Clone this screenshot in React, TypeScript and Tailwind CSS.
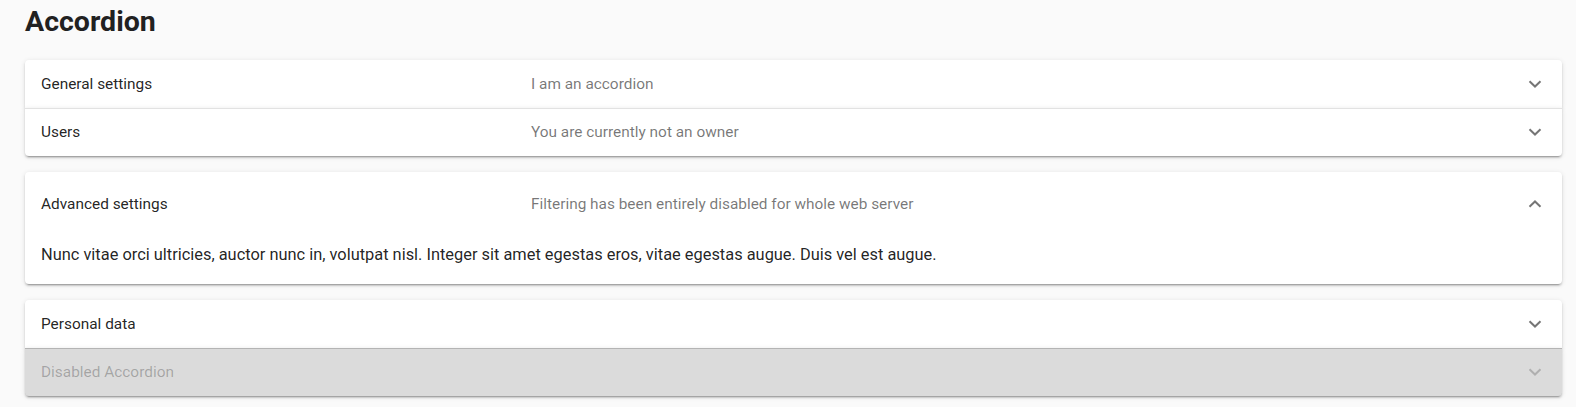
import React from "react";

type Panel = {
  title: string;
  desc?: string;
  expanded?: boolean;
  disabled?: boolean;
  body?: string;
};

// elevation-2 like the material panels, with an inset top line for stacked items
const shadow =
  "shadow-[0_3px_1px_-2px_rgba(0,0,0,0.2),0_2px_2px_0_rgba(0,0,0,0.14),0_1px_5px_0_rgba(0,0,0,0.12)]";
const shadowLine =
  "shadow-[inset_0_1px_0_#e2e2e2,0_3px_1px_-2px_rgba(0,0,0,0.2),0_2px_2px_0_rgba(0,0,0,0.14),0_1px_5px_0_rgba(0,0,0,0.12)]";
const shadowDark =
  "shadow-[inset_0_1px_0_#b4b4b4,0_3px_1px_-2px_rgba(0,0,0,0.2),0_2px_2px_0_rgba(0,0,0,0.14),0_1px_5px_0_rgba(0,0,0,0.12)]";

function Chevron({ up, disabled }: { up?: boolean; disabled?: boolean }) {
  return (
    <svg
      width="14"
      height="8"
      viewBox="0 0 14 8"
      className={up ? "rotate-180" : ""}
    >
      <polyline
        points="1.5,1.2 7,6.5 12.5,1.2"
        fill="none"
        stroke={disabled ? "rgba(0,0,0,0.2)" : "rgba(0,0,0,0.54)"}
        strokeWidth="2"
      />
    </svg>
  );
}

function Header({ p }: { p: Panel }) {
  return (
    <div
      className={`flex items-center px-4 text-[15.4px] ${
        p.expanded ? "h-16" : "h-12"
      }`}
    >
      <div
        className={`flex-1 mr-4 mt-[2px] ${
          p.disabled ? "text-black/[0.26]" : "text-black/[0.87]"
        }`}
      >
        {p.title}
      </div>
      <div className="flex-[2] mr-4 mt-[2px] text-black/[0.54]">{p.desc}</div>
      <div className="w-[51px] flex justify-end pr-[4px]">
        <Chevron up={p.expanded} disabled={p.disabled} />
      </div>
    </div>
  );
}

function Group({ panels }: { panels: Panel[] }) {
  return (
    <div className="flex flex-col">
      {panels.map((p, i) => (
        <div
          key={p.title}
          className={`${i === 0 ? shadow : p.disabled ? shadowDark : shadowLine} ${
            p.disabled ? "bg-[#dbdbdb]" : "bg-white"
          } ${i === 0 ? "rounded-t" : ""} ${
            i === panels.length - 1 ? "rounded-b" : ""
          }`}
        >
          <Header p={p} />
          {p.body && (
            <div className="px-4 pt-[7px] pb-[17px] text-[16.4px] leading-6 text-black/[0.87]">
              {p.body}
            </div>
          )}
        </div>
      ))}
    </div>
  );
}

export default function App() {
  return (
    <div
      className="min-h-[407px] bg-[#fafafa] pl-[25px] pr-[14px]"
      style={{ fontFamily: "Roboto, 'Liberation Sans', sans-serif" }}
    >
      <h1 className="text-[28.5px] leading-8 font-bold text-[#212121] pt-[6px] pb-[22px]">
        Accordion
      </h1>
      <div className="flex flex-col gap-4">
        <Group
          panels={[
            { title: "General settings", desc: "I am an accordion" },
            { title: "Users", desc: "You are currently not an owner" },
          ]}
        />
        <Group
          panels={[
            {
              title: "Advanced settings",
              desc: "Filtering has been entirely disabled for whole web server",
              expanded: true,
              body: "Nunc vitae orci ultricies, auctor nunc in, volutpat nisl. Integer sit amet egestas eros, vitae egestas augue. Duis vel est augue.",
            },
          ]}
        />
        <Group
          panels={[
            { title: "Personal data" },
            { title: "Disabled Accordion", disabled: true },
          ]}
        />
      </div>
    </div>
  );
}
